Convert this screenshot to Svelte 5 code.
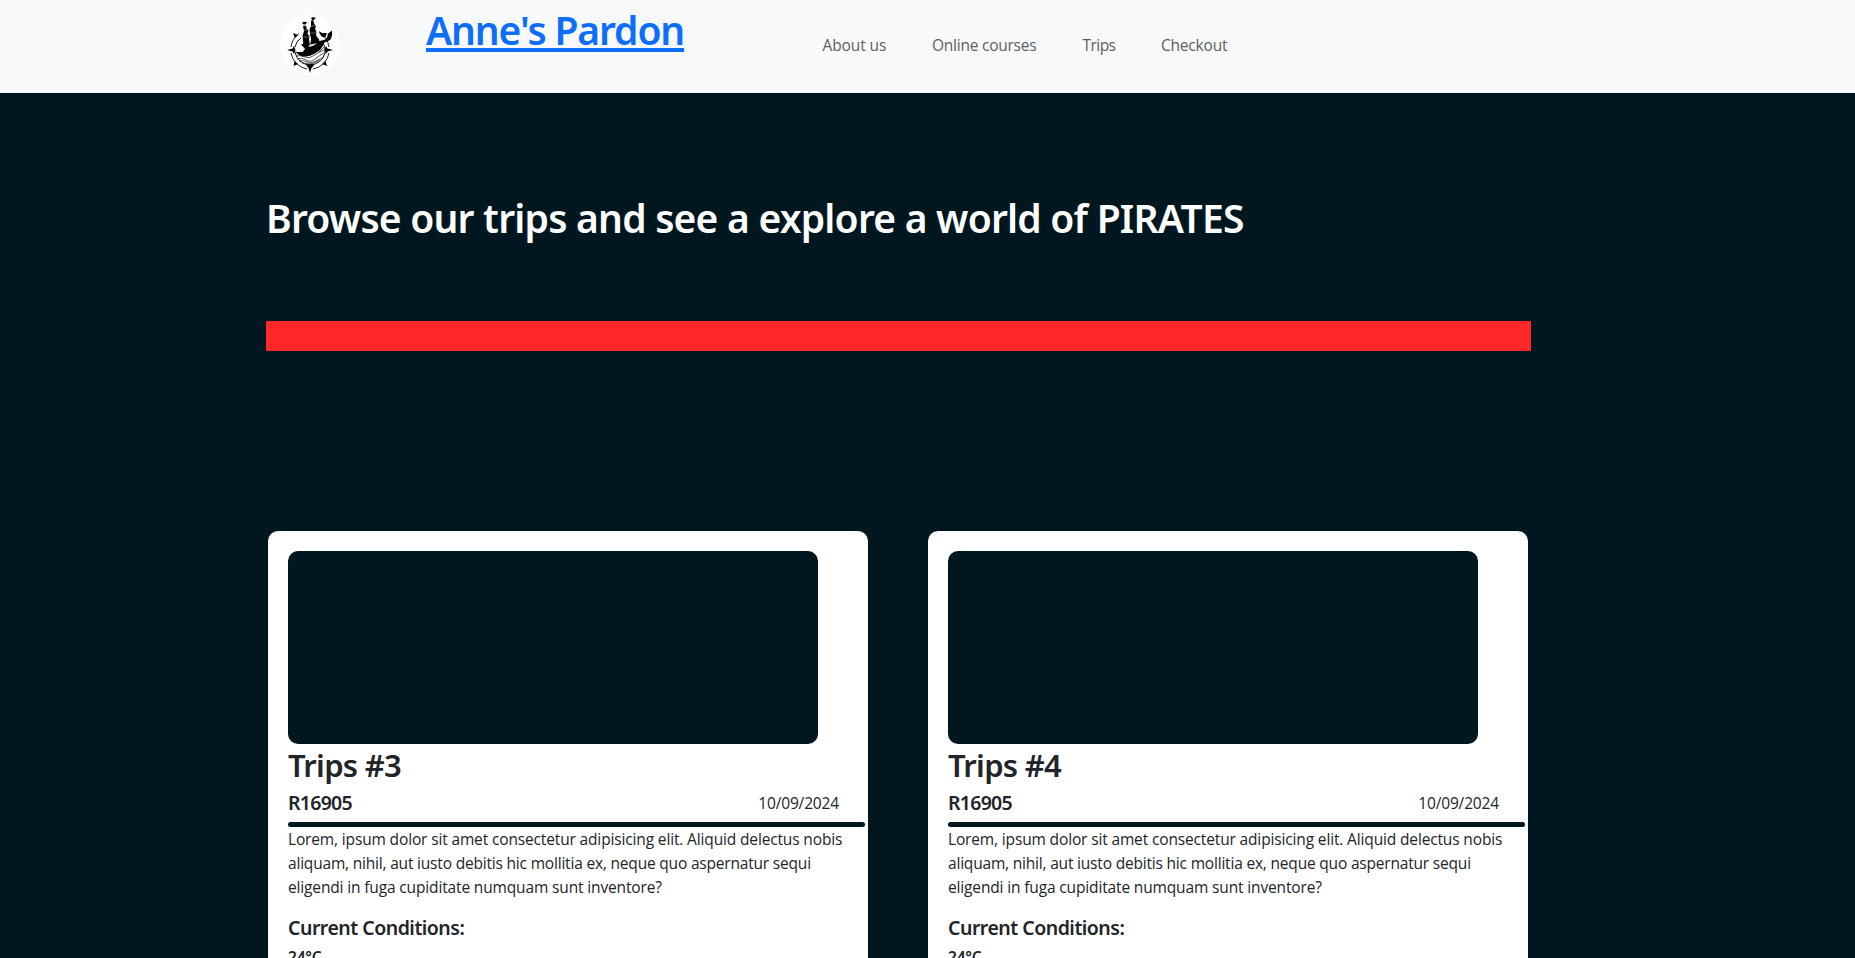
<script>
  const links = [
    { label: 'About us', width: 64, gap: '-0.1px' },
    { label: 'Online courses', width: 105, gap: '-0.24px' },
    { label: 'Trips', width: 33, gap: '-0.55px' },
    { label: 'Checkout', width: 66, gap: '-0.2px' },
  ];

  const trips = [
    { title: 'Trips #3', code: 'R16905', date: '10/09/2024', temp: '24°C' },
    { title: 'Trips #4', code: 'R16905', date: '10/09/2024', temp: '24°C' },
  ];
</script>

<header>
  <svg class="logo" viewBox="0 0 80 94" aria-hidden="true">
    <circle cx="40" cy="45" r="30" fill="#fff" />
    <g fill="none" stroke="#111">
      <path d="M29 33.500A19.500 19.500 0 0 0 21 47M21 53A19.500 19.500 0 0 0 37 69M43 69A19.500 19.500 0 0 0 59 53M59 47A19.500 19.500 0 0 0 49 32.500" stroke-width="0.9" />
      <path d="M25 52A15.300 15.300 0 0 0 55 53Q56 46 52 41M25 47Q26 41 31 38" stroke-width="1" />
      <path d="M26 56q5-1 9 1t8-1 11-6M27 59q5-2 9 1t9-1 9-6M29 61q5-1 8 1t9-1 7-4M32 63q5 1 8 1t10-4M49 52l5-5" stroke-width="0.7" />
    </g>
    <g fill="#050505">
      <path d="M17 50l5.500-1.500 1.500-2.500 1.500 4-1.500 4-1.500-2.500zM63 50l-5.500-1.500-1.500-2.500-1.500 4 1.500 4 1.500-2.500zM40 73l-1.500-5-3-3.500h9l-3 3.500zM23 33l5 2-3 3zM23.500 66l1-5 3.500 3zM57 66l-5-2 3.500-3zM57 33l-5 0 3 5z" />
      <path d="M25 51.500q8 1.500 15-1l5-6 6-4q4 0 6-3l1-4 4-3q.5 6-1.500 9l-3 2-3 1-2 4q-2 4-6 6-9 6-17 3z" />
      <path d="M32 23l2-1.500 1 .5h2l-1.500 2.500h-2zM33 26l3-.5.5 3 2 2-1 3 2 3-.5 3 1 6-7 1-1-.5q2-3 1-6l-.5-4 1.500-5zM41 18l2-1 1 .5h2l-1.500 2-2 1zM41 20.500l2.500 0 .5 3 2 3-1 2 1.500 4-.5 3 3 4 1 3-9 2-1-.5q2-5 0-9l-.5-5 1.500-4zM49 31l3 2 3 1.500-1 3-3-1.500zM31 44l7 0 1 3 9-3 1 1-8 7-9 1 3-4z" />
    </g>
    <path d="M34 30h4M40 26h5M40 33h7M33 37h6" stroke="#fff" stroke-width="0.35" />
  </svg>
  <a class="brand" href="#home">Anne's Pardon</a>
  <nav>
    {#each links as link}
      <a href="#top" style:width="{link.width}px" style:letter-spacing={link.gap}>{link.label}</a>
    {/each}
  </nav>
</header>

<main>
  <h1>Browse our trips and see a explore a world of PIRATES</h1>
  <div class="banner"></div>
  <section class="cards">
    {#each trips as trip}
      <article>
        <div class="photo"></div>
        <h2>{trip.title}</h2>
        <div class="meta">
          <h5>{trip.code}</h5>
          <span class="date">{trip.date}</span>
        </div>
        <div class="rule"></div>
        <p>
          <span class="l1">Lorem, ipsum dolor sit amet consectetur adipisicing elit. Aliquid delectus nobis</span>
          <span class="l2">aliquam, nihil, aut iusto debitis hic mollitia ex, neque quo aspernatur sequi</span>
          <span class="l3">eligendi in fuga cupiditate numquam sunt inventore?</span>
        </p>
        <h5 class="conditions">Current Conditions:</h5>
        <h6>{trip.temp}</h6>
      </article>
    {/each}
  </section>
</main>

<style>
  :global(body) {
    margin: 0;
    background: #00171f;
    color: #212529;
    font: 400 15.5px/24px "Open Sans", "Noto Sans", sans-serif;
  }
  :global(#app) {
    height: 958px;
    overflow: hidden;
  }
  h1, h2, h5, h6, p {
    margin: 0;
  }
  h1, h2, h5, h6, .brand {
    font-family: "Noto Sans", "Open Sans", sans-serif;
    font-weight: 600;
  }
  header {
    display: flex;
    height: 93px;
    padding-left: 270px;
    background: #f8f9fb;
  }
  .logo {
    flex: none;
    width: 80px;
    height: 94px;
  }
  .brand {
    flex: none;
    width: 258px;
    height: 48px;
    margin: 7px 0 0 76px;
    color: #0d6efd;
    font-size: 39px;
    line-height: 46px;
    letter-spacing: -1.12px;
    white-space: nowrap;
    text-decoration: underline;
    text-decoration-thickness: 4px;
    text-underline-offset: 3px;
    text-decoration-skip-ink: none;
  }
  nav {
    display: flex;
    gap: 45.500px;
    margin: 33px 0 0 138.500px;
  }
  nav a {
    color: #5c5f61;
    text-decoration: none;
    white-space: nowrap;
  }
  main {
    width: 1265px;
    margin-left: 266px;
    padding-top: 101px;
  }
  h1 {
    color: #fff;
    font-size: 39px;
    line-height: 48px;
    letter-spacing: -0.78px;
    white-space: nowrap;
  }
  .banner {
    height: 30px;
    margin-top: 79px;
    border-radius: 1px;
    background: #ff2828;
  }
  .cards {
    display: grid;
    grid-template-columns: 600px 600px;
    gap: 60px;
    margin: 180px 0 0 2px;
  }
  article {
    box-sizing: border-box;
    height: 540px;
    padding: 20px 3px 0 20px;
    border-radius: 10px;
    background: #fff;
  }
  .photo {
    width: 530px;
    height: 193px;
    border-radius: 10px;
    background: #00171f;
  }
  h2 {
    padding-top: 2px;
    font-size: 31px;
    line-height: 38px;
    letter-spacing: -0.73px;
  }
  .meta {
    display: flex;
    justify-content: space-between;
    padding: 7px 26px 0 0;
    height: 31px;
  }
  h5 {
    font-size: 19.5px;
    line-height: 24px;
    letter-spacing: -0.72px;
  }
  .date {
    letter-spacing: -0.15px;
  }
  .rule {
    height: 5px;
    border-radius: 3px;
    background: #00171f;
  }
  p span {
    display: block;
    white-space: nowrap;
  }
  .l1 {
    letter-spacing: -0.145px;
  }
  .l2 {
    letter-spacing: -0.19px;
  }
  .l3 {
    letter-spacing: -0.145px;
  }
  .conditions {
    margin-top: 17px;
    letter-spacing: -0.5px;
  }
  h6 {
    margin-top: 8px;
    font-size: 15.5px;
    line-height: 19px;
    letter-spacing: -0.2px;
  }
</style>
